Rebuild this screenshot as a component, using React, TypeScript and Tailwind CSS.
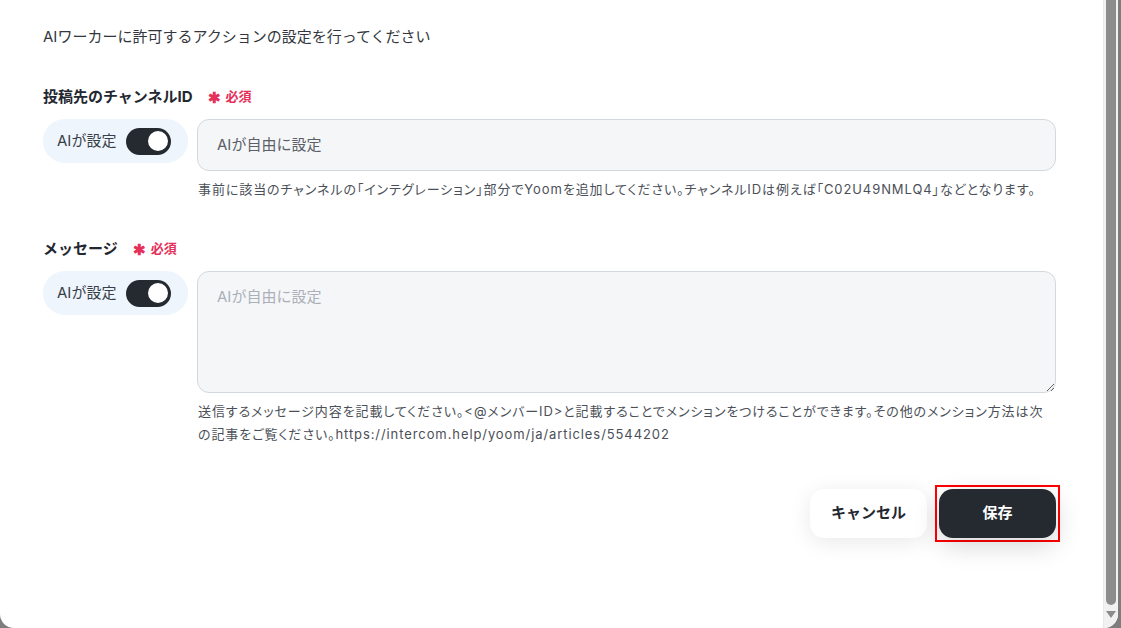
import React, { useState } from 'react';

interface FieldProps {
  label: string;
  help: React.ReactNode;
  multiline?: boolean;
  dim?: boolean;
}

const AiToggle: React.FC = () => {
  const [on, setOn] = useState(true);
  return (
    <div className="flex items-center h-[44px] w-[145px] shrink-0 rounded-full bg-[#eef5fd] pl-[14px] pr-[13px] gap-[10px]">
      <span className="text-[15px] text-[#3a3f47] whitespace-nowrap">AIが設定</span>
      <button
        onClick={() => setOn(!on)}
        className={`flex items-center w-[45px] h-[27px] rounded-full px-[3px] ${
          on ? 'bg-[#252a31] justify-end' : 'bg-gray-300 justify-start'
        }`}
      >
        <span className="block w-[20px] h-[20px] rounded-full bg-white" />
      </button>
    </div>
  );
};

const Field: React.FC<FieldProps> = ({ label, help, multiline, dim }) => (
  <div>
    <div className="flex items-center h-[24px] gap-[15px]">
      <span className="text-[15px] font-bold text-[#23272f]">{label}</span>
      <span className="flex items-center gap-[5px] text-[13px] font-bold text-[#e5305a]">
        <span className="text-[15px] leading-none">✱</span>
        <span>必須</span>
      </span>
    </div>

    <div className="flex items-start gap-[9px] mt-[10px]">
      <AiToggle />
      <div className="flex-1">
        {multiline ? (
          <textarea
            readOnly
            placeholder="AIが自由に設定"
            className="block w-full h-[122px] rounded-[12px] border border-[#d3d8de] bg-[#f5f6f8] px-[19px] py-[14px] text-[15px] leading-[22px] placeholder:text-[#aab0b8] outline-none resize-y"
          />
        ) : (
          <div
            className={`flex items-center h-[52px] rounded-[12px] border border-[#d3d8de] bg-[#f5f6f8] px-[19px] text-[15px] ${
              dim ? 'text-[#aab0b8]' : 'text-[#5b6068]'
            }`}
          >
            AIが自由に設定
          </div>
        )}
        <p className="mt-[7px] text-[13px] leading-[23px] tracking-[0.07em] text-[#4b5058] pl-px [font-feature-settings:'palt']">
          {help}
        </p>
      </div>
    </div>
  </div>
);

export default function App() {
  return (
    <div
      className="flex h-[628px] w-full bg-[#7d7d7d] overflow-hidden"
      style={{ fontFamily: '"Inter", "Noto Sans CJK JP", sans-serif' }}
    >
      <div className="flex flex-1 bg-white rounded-b-[14px] overflow-hidden">
        <div className="flex-1 pl-[43px] pr-[47px] pt-[25px]">
          <p className="text-[15px] leading-[24px] text-[#33373d]">
            AIワーカーに許可するアクションの設定を行ってください
          </p>

          <div className="mt-[36px]">
            <Field
              label="投稿先のチャンネルID"
              help="事前に該当のチャンネルの「インテグレーション」部分でYoomを追加してください。チャンネルIDは例えば「C02U49NMLQ4」などとなります。"
            />
          </div>

          <div className="mt-[36px]">
            <Field
              label="メッセージ"
              multiline
              help="送信するメッセージ内容を記載してください。<@メンバーID>と記載することでメンションをつけることができます。その他のメンション方法は次の記事をご覧ください。https://intercom.help/yoom/ja/articles/5544202"
            />
          </div>

          {/* footer actions */}
          <div className="flex justify-end items-center gap-[8px] mt-[39px] mr-[-4px]">
            <button className="w-[117px] h-[49px] rounded-[14px] bg-white text-[15px] font-bold text-[#23272f] shadow-[0_4px_22px_rgba(0,0,0,0.09)]">
              キャンセル
            </button>
            <div className="border-2 border-[#ff0000] p-[2px]">
              <button className="block w-[117px] h-[49px] rounded-[14px] bg-[#252a31] text-[15px] font-bold text-white shadow-[0_8px_26px_rgba(0,0,0,0.16)]">
                保存
              </button>
            </div>
          </div>
        </div>

        {/* scrollbar */}
        <div className="flex flex-col items-center w-[15px] shrink-0 bg-[#f1f1f1] border-l border-[#e8e8e8]">
          <div className="w-[10px] h-[605px] rounded-b-full bg-[#8c8c8c]" />
          <svg width="10" height="8" viewBox="0 0 10 8" className="mt-[6px]">
            <path d="M0 0 L10 0 L5 7 Z" fill="#8c8c8c" />
          </svg>
        </div>
      </div>
      <div className="w-[3px] shrink-0" />
    </div>
  );
}
